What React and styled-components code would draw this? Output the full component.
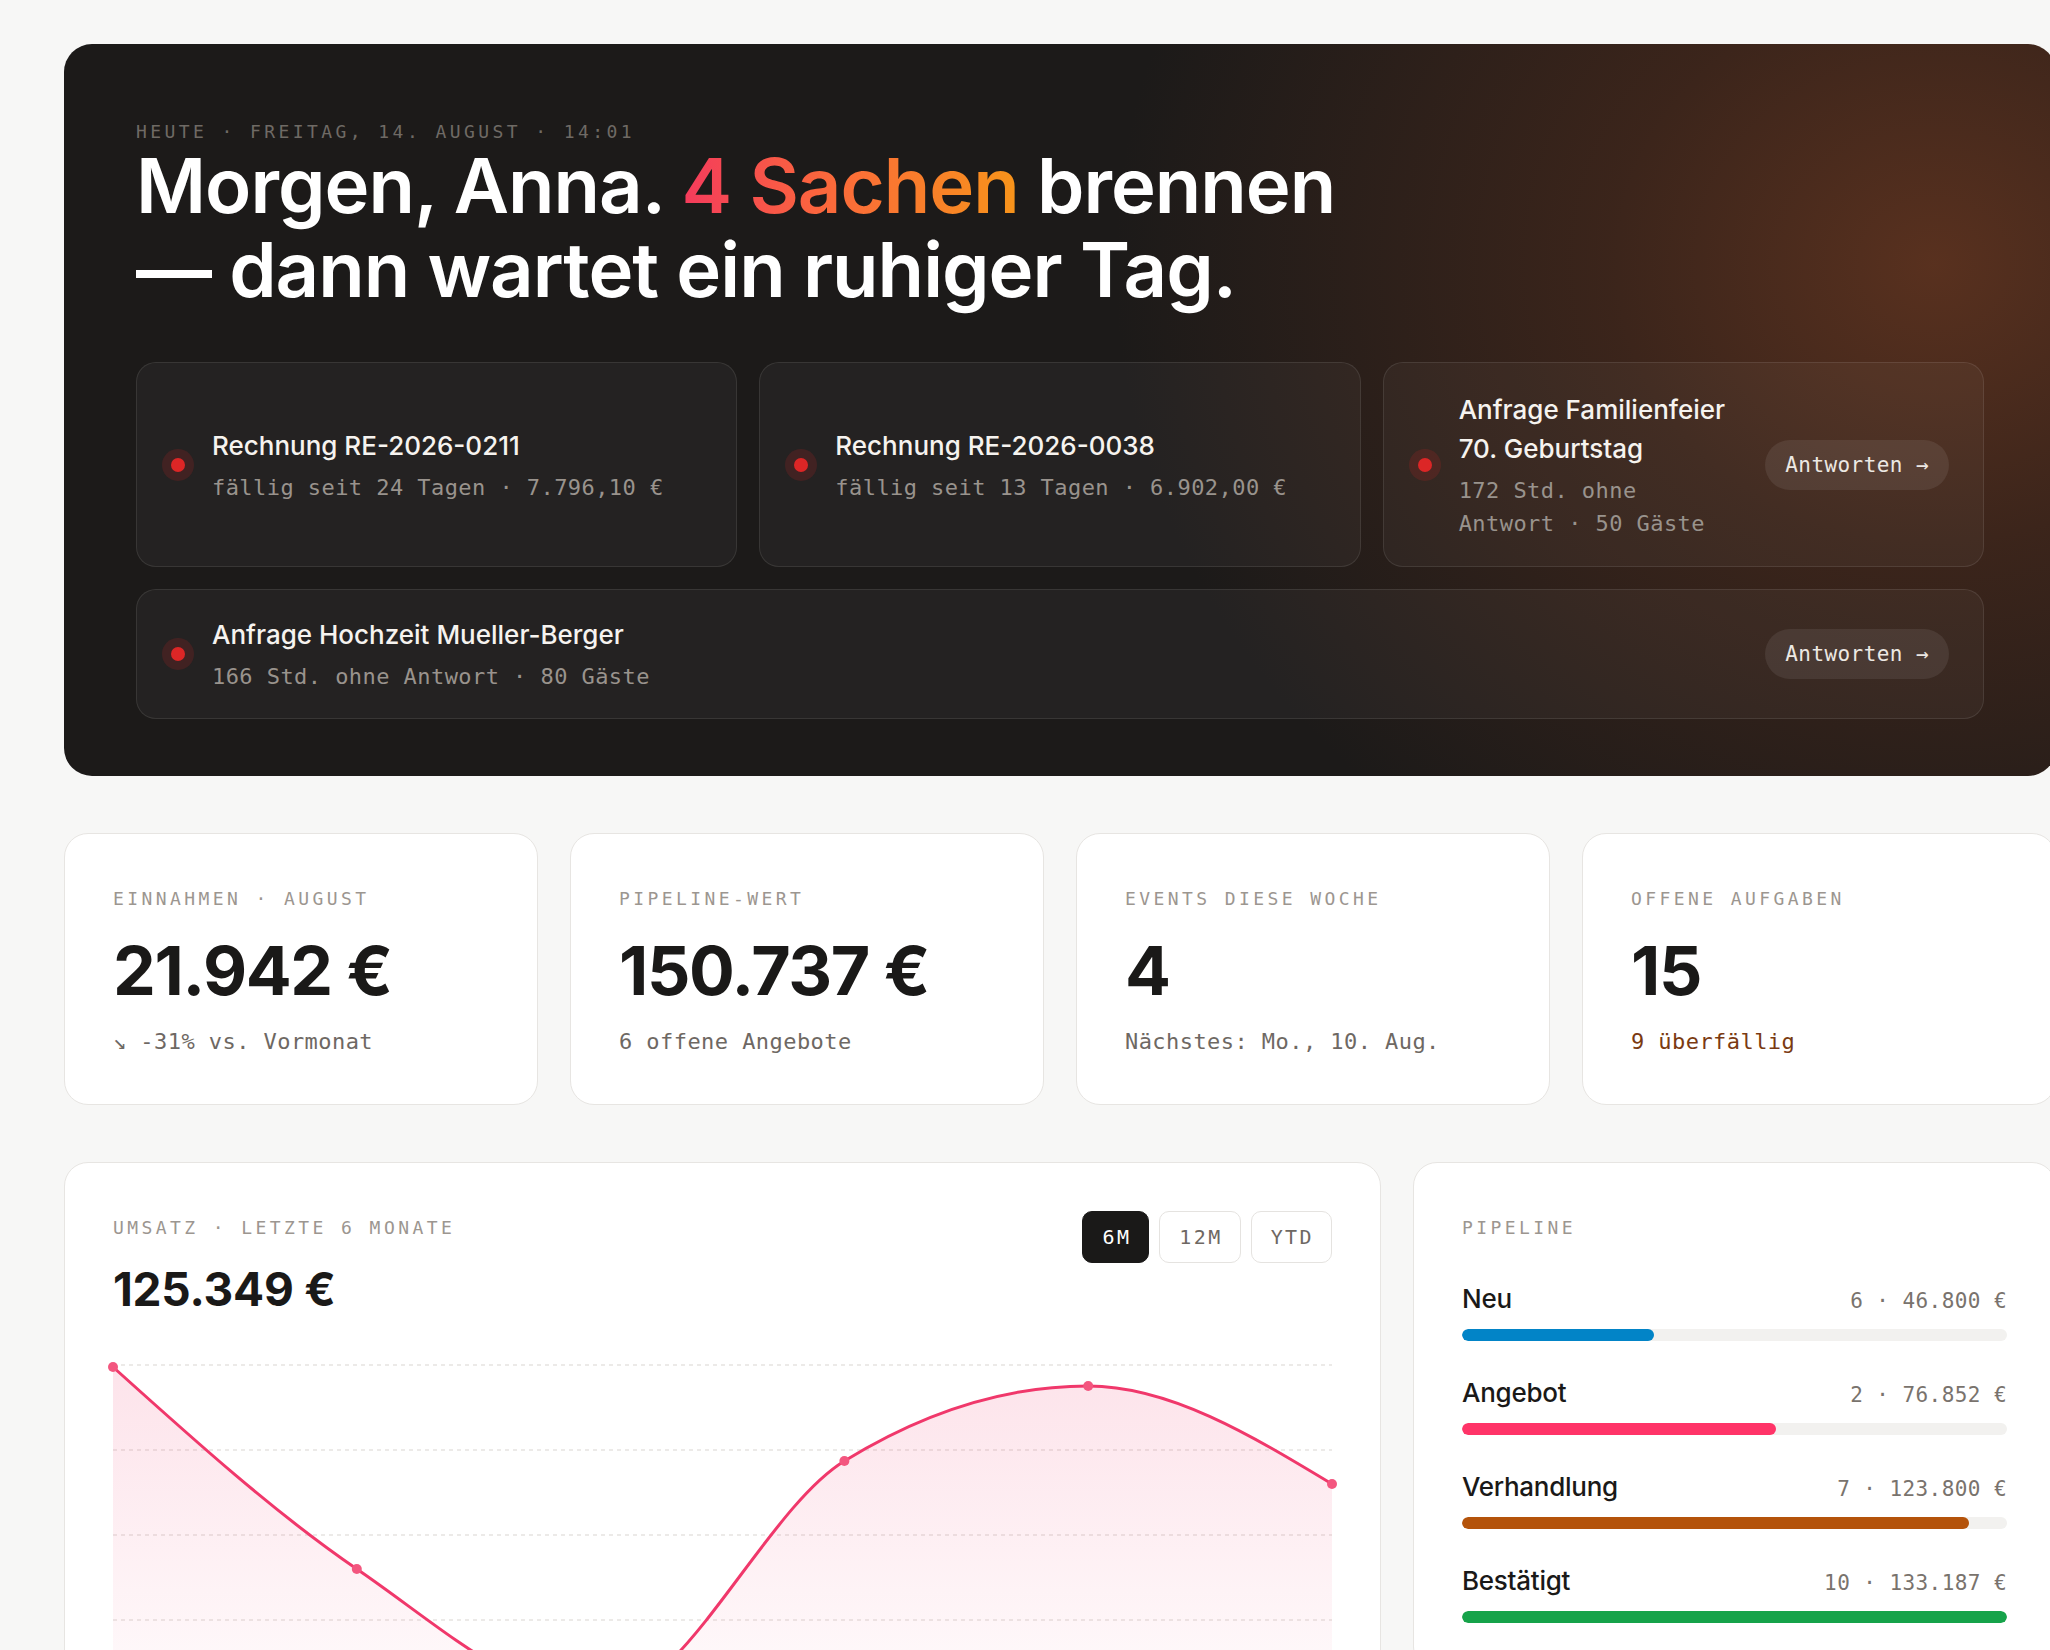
import React from 'react';
import styled, { createGlobalStyle } from 'styled-components';

const MONO = '"DejaVu Sans Mono", "Liberation Mono", monospace';
const SANS = 'Inter, "Noto Sans", sans-serif';

const GlobalStyle = createGlobalStyle`
  html, body {
    margin: 0;
    padding: 0;
    background: #f7f7f6;
  }
  body {
    overflow: hidden;
    font-family: ${SANS};
    color: #1a1918;
    -webkit-font-smoothing: antialiased;
  }
`;

const alerts = [
  { id: 'inv-0211', title: 'Rechnung RE-2026-0211', meta: 'fällig seit 24 Tagen · 7.796,10 €' },
  { id: 'inv-0038', title: 'Rechnung RE-2026-0038', meta: 'fällig seit 13 Tagen · 6.902,00 €' },
  { id: 'req-fam', title: 'Anfrage Familienfeier 70. Geburtstag', meta: '172 Std. ohne Antwort · 50 Gäste', action: 'Antworten →' },
  { id: 'req-wed', title: 'Anfrage Hochzeit Mueller-Berger', meta: '166 Std. ohne Antwort · 80 Gäste', action: 'Antworten →', wide: true },
];

const stats = [
  { label: 'Einnahmen · August', value: '21.942 €', note: '↘ -31% vs. Vormonat' },
  { label: 'Pipeline-Wert', value: '150.737 €', note: '6 offene Angebote' },
  { label: 'Events diese Woche', value: '4', note: 'Nächstes: Mo., 10. Aug.' },
  { label: 'Offene Aufgaben', value: '15', note: '9 überfällig', warn: true },
];

const pipeline = [
  { stage: 'Neu', count: 6, amount: 46800, color: '#0284c7' },
  { stage: 'Angebot', count: 2, amount: 76852, color: '#ff3468' },
  { stage: 'Verhandlung', count: 7, amount: 123800, color: '#b4530b' },
  { stage: 'Bestätigt', count: 10, amount: 133187, color: '#16a34a' },
];

const revenue = [26900, 16800, 10250, 22200, 25950, 21050];
const CHART_W = 1219;
const CHART_H = 340;
const CHART_PAD = 8;
const DOMAIN = [10000, 27000];

const formatEuro = (n) => `${n.toLocaleString('de-DE')} €`;

// monotone-x cubic, same idea as d3.curveMonotoneX
function monotonePath(pts) {
  const n = pts.length;
  const slopes = [];
  for (let i = 0; i < n - 1; i++) {
    slopes.push((pts[i + 1][1] - pts[i][1]) / (pts[i + 1][0] - pts[i][0]));
  }
  const tangents = new Array(n).fill(0);
  for (let i = 1; i < n - 1; i++) {
    const s0 = slopes[i - 1];
    const s1 = slopes[i];
    const h0 = pts[i][0] - pts[i - 1][0];
    const h1 = pts[i + 1][0] - pts[i][0];
    const p = (s0 * h1 + s1 * h0) / (h0 + h1);
    tangents[i] = (Math.sign(s0) + Math.sign(s1)) * Math.min(Math.abs(s0), Math.abs(s1), 0.5 * Math.abs(p)) || 0;
  }
  tangents[0] = (3 * slopes[0] - tangents[1]) / 2;
  tangents[n - 1] = (3 * slopes[n - 2] - tangents[n - 2]) / 2;
  let d = `M${pts[0][0]},${pts[0][1]}`;
  for (let i = 0; i < n - 1; i++) {
    const [x0, y0] = pts[i];
    const [x1, y1] = pts[i + 1];
    const dx = (x1 - x0) / 3;
    d += ` C${x0 + dx},${y0 + dx * tangents[i]} ${x1 - dx},${y1 - dx * tangents[i + 1]} ${x1},${y1}`;
  }
  return d;
}

function RevenueChart () {
  const step = CHART_W / (revenue.length - 1);
  const pts = revenue.map((v, i) => [
    i * step,
    CHART_PAD + (1 - (v - DOMAIN[0]) / (DOMAIN[1] - DOMAIN[0])) * CHART_H,
  ]);
  const line = monotonePath(pts);
  const area = `${line} L${CHART_W},${CHART_H + CHART_PAD} L0,${CHART_H + CHART_PAD} Z`;
  const grid = [0, 0.25, 0.5, 0.75, 1].map((f) => CHART_PAD + f * CHART_H);
  return (
    <ChartSvg viewBox={`0 0 ${CHART_W} ${CHART_H + CHART_PAD * 2}`} width="100%" height={CHART_H + CHART_PAD * 2}>
      <defs>
        <linearGradient id="revFill" x1="0" y1="0" x2="0" y2="1">
          <stop offset="0%" stopColor="#f0386b" stopOpacity="0.14" />
          <stop offset="100%" stopColor="#f0386b" stopOpacity="0.02" />
        </linearGradient>
      </defs>
      {grid.map((y) => (
        <line key={y} x1="0" x2={CHART_W} y1={y} y2={y} stroke="#e6e4e1" strokeWidth="1.5" strokeDasharray="4 4" />
      ))}
      <path d={area} fill="url(#revFill)" />
      <path d={line} fill="none" stroke="#f0386b" strokeWidth="3" strokeLinecap="round" />
      {pts.map(([x, y]) => (
        <circle key={x} cx={x} cy={y} r="5" fill="#f3567f" />
      ))}
    </ChartSvg>
  );
}

export default function App () {
  const maxAmount = Math.max(...pipeline.map((p) => p.amount));
  return (
    <>
      <GlobalStyle />
      <Page>
        <Main>
          <Hero>
            <Eyebrow $tone="dark">Heute · Freitag, 14. August · 14:01</Eyebrow>
            <Headline>
              Morgen, Anna. <Accent>4 Sachen</Accent> brennen — dann wartet ein ruhiger Tag.
            </Headline>
            <AlertGrid>
              {alerts.map((a) => (
                <AlertCard key={a.id} $wide={a.wide}>
                  <AlertDot />
                  <AlertBody>
                    <AlertTitle>{a.title}</AlertTitle>
                    <AlertMeta>{a.meta}</AlertMeta>
                  </AlertBody>
                  {a.action && <PillButton type="button">{a.action}</PillButton>}
                </AlertCard>
              ))}
            </AlertGrid>
          </Hero>

          <StatGrid>
            {stats.map((s) => (
              <Card key={s.label}>
                <CardLabel>{s.label}</CardLabel>
                <StatValue>{s.value}</StatValue>
                <StatNote $warn={s.warn}>{s.note}</StatNote>
              </Card>
            ))}
          </StatGrid>

          <BottomGrid>
            <Card>
              <ChartHeader>
                <div>
                  <CardLabel>Umsatz · letzte 6 Monate</CardLabel>
                  <ChartTotal>125.349 €</ChartTotal>
                </div>
                <Segmented>
                  <SegButton type="button" $active>6M</SegButton>
                  <SegButton type="button">12M</SegButton>
                  <SegButton type="button">YTD</SegButton>
                </Segmented>
              </ChartHeader>
              <RevenueChart />
            </Card>

            <Card>
              <CardLabel>Pipeline</CardLabel>
              <StageList>
                {pipeline.map((p) => (
                  <li key={p.stage}>
                    <StageHead>
                      <StageName>{p.stage}</StageName>
                      <StageMeta>{p.count} · {formatEuro(p.amount)}</StageMeta>
                    </StageHead>
                    <Track>
                      <Fill $color={p.color} style={{ width: `${(p.amount / maxAmount) * 100}%` }} />
                    </Track>
                  </li>
                ))}
              </StageList>
            </Card>
          </BottomGrid>
        </Main>
      </Page>
    </>
  );
}

const Page = styled('div')`
  padding: 44px 0 0 64px;
`;

const Main = styled('main')`
  width: 1992px;
  display: flex;
  flex-direction: column;
  gap: 57px;
`;

const Hero = styled('section')`
  border-radius: 28px;
  padding: 74px 72px 57px;
  color: #fff;
  background:
    radial-gradient(ellipse 820px 720px at 1870px 220px, rgba(92, 50, 31, 0.95) 0%, rgba(78, 43, 28, 0.62) 40%, rgba(28, 26, 25, 0) 100%),
    #1c1a19;
`;

const Eyebrow = styled('div')`
  font-family: ${MONO};
  font-size: 18px;
  line-height: 27px;
  letter-spacing: 0.19em;
  text-transform: uppercase;
  color: ${(p) => (p.$tone === 'dark' ? '#6f6a65' : '#9c9690')};
`;

const CardLabel = styled(Eyebrow)`
  line-height: 34px;
`;

const Headline = styled('h1')`
  margin: -2px 0 0;
  max-width: 1240px;
  font-family: ${SANS};
  font-weight: 600;
  font-size: 76px;
  line-height: 84px;
  letter-spacing: -0.013em;
  color: #fff;
`;

const Accent = styled('span')`
  background: linear-gradient(90deg, #f43b5c 0%, #fb6a3a 45%, #f7941a 100%);
  -webkit-background-clip: text;
  background-clip: text;
  color: transparent;
`;

const AlertGrid = styled('div')`
  margin-top: 51px;
  display: grid;
  grid-template-columns: repeat(3, minmax(0, 1fr));
  gap: 22px;
`;

const AlertCard = styled('div')`
  grid-column: ${(p) => (p.$wide ? '1 / -1' : 'auto')};
  display: flex;
  align-items: center;
  gap: 27px;
  min-height: ${(p) => (p.$wide ? '130px' : '205px')};
  box-sizing: border-box;
  padding: 24px 34px;
  border-radius: 20px;
  border: 1px solid rgba(255, 255, 255, 0.09);
  background: rgba(255, 255, 255, 0.04);
`;

const AlertDot = styled('span')`
  flex: none;
  width: 14px;
  height: 14px;
  border-radius: 50%;
  background: #dc2626;
  box-shadow: 0 0 0 9px rgba(220, 38, 38, 0.16);
`;

const AlertBody = styled('div')`
  flex: 1;
  min-width: 0;
`;

const AlertTitle = styled('div')`
  font-size: 26px;
  font-weight: 500;
  line-height: 39px;
  letter-spacing: 0;
  color: #f6f3ef;
`;

const AlertMeta = styled('div')`
  margin-top: 6px;
  font-family: ${MONO};
  font-size: 22px;
  line-height: 33px;
  letter-spacing: 0.02em;
  color: #99938d;
`;

const PillButton = styled('button')`
  flex: none;
  height: 50px;
  padding: 0 20px;
  border: 0;
  border-radius: 999px;
  background: rgba(255, 255, 255, 0.08);
  color: #ece8e3;
  font-family: ${MONO};
  font-size: 21px;
  letter-spacing: 0.02em;
  cursor: pointer;
`;

const StatGrid = styled('div')`
  display: grid;
  grid-template-columns: repeat(4, minmax(0, 1fr));
  gap: 32px;
`;

const Card = styled('div')`
  box-sizing: border-box;
  padding: 48px 48px 47px;
  border-radius: 24px;
  border: 1px solid #e7e5e2;
  background: #fff;
`;

const StatValue = styled('div')`
  margin-top: 20px;
  font-size: 68px;
  font-weight: 700;
  line-height: 68px;
  letter-spacing: -0.02em;
  color: #1a1918;
`;

const StatNote = styled('div')`
  margin-top: 22px;
  font-family: ${MONO};
  font-size: 22px;
  line-height: 31px;
  letter-spacing: 0.02em;
  color: ${(p) => (p.$warn ? '#7a3a12' : '#6e6863')};
`;

const BottomGrid = styled('div')`
  display: grid;
  grid-template-columns: 1317px minmax(0, 1fr);
  gap: 32px;
  align-items: start;
`;

const ChartHeader = styled('div')`
  display: flex;
  justify-content: space-between;
  align-items: flex-start;
`;

const ChartTotal = styled('div')`
  margin-top: 20px;
  font-size: 46px;
  font-weight: 700;
  line-height: 48px;
  letter-spacing: -0.005em;
  color: #1a1918;
`;

const Segmented = styled('div')`
  display: flex;
  gap: 10px;
`;

const SegButton = styled('button')`
  height: 52px;
  padding: 0 17px 0 19px;
  border-radius: 10px;
  border: 1px solid ${(p) => (p.$active ? '#1a1918' : '#e5e3e0')};
  background: ${(p) => (p.$active ? '#1a1918' : '#fff')};
  color: ${(p) => (p.$active ? '#fff' : '#6e6863')};
  font-family: ${MONO};
  font-size: 20px;
  letter-spacing: 0.12em;
  cursor: pointer;
`;

const ChartSvg = styled('svg')`
  display: block;
  margin-top: 44px;
  overflow: visible;
`;

const StageList = styled('ul')`
  list-style: none;
  margin: 36px 0 0;
  padding: 0;
  display: flex;
  flex-direction: column;
  gap: 34px;
`;

const StageHead = styled('div')`
  display: flex;
  justify-content: space-between;
  align-items: baseline;
`;

const StageName = styled('span')`
  font-size: 26px;
  font-weight: 500;
  line-height: 36px;
  letter-spacing: -0.01em;
  color: #1a1918;
`;

const StageMeta = styled('span')`
  font-family: ${MONO};
  font-size: 21px;
  letter-spacing: 0.02em;
  color: #79736d;
`;

const Track = styled('div')`
  margin-top: 12px;
  height: 12px;
  border-radius: 6px;
  background: #f2f1ef;
  overflow: hidden;
`;

const Fill = styled('div')`
  height: 100%;
  border-radius: 6px;
  background: ${(p) => p.$color};
`;
